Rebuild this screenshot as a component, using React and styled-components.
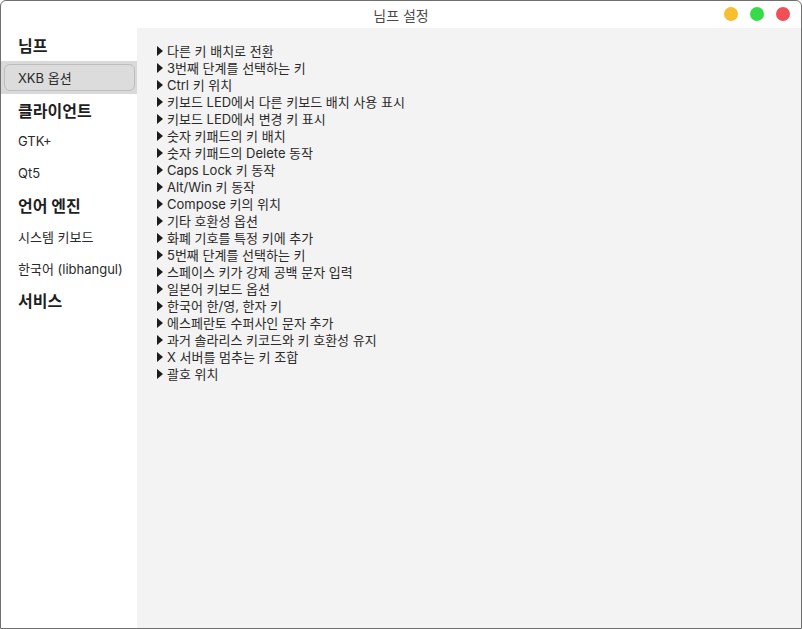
import styled, { createGlobalStyle } from "styled-components";

const Global = createGlobalStyle`
  html, body { margin: 0; padding: 0; background: #ffffff; }
  body { font-family: Inter, "Noto Sans CJK KR", sans-serif; }
`;

const Window = styled.div`
  width: 802px;
  height: 629px;
  box-sizing: border-box;
  border: 1px solid #6f6f6f;
  border-radius: 6px 6px 0 0;
  display: flex;
  flex-direction: column;
  overflow: hidden;
  background: #fff;
`;

const TitleBar = styled.div`
  height: 27px;
  flex: none;
  position: relative;
  display: flex;
  align-items: center;
  justify-content: center;
  font-size: 14px;
  color: #4a4a4a;
`;

const Controls = styled.div`
  position: absolute;
  right: 11px;
  top: 6px;
  display: flex;
  gap: 12px;
`;

const Dot = styled.span`
  width: 14px;
  height: 14px;
  border-radius: 50%;
  background: ${({ $c }) => $c};
`;

const Body = styled.div`
  flex: 1;
  display: flex;
  min-height: 0;
`;

const Sidebar = styled.div`
  width: 136px;
  flex: none;
  background: #fff;
  padding-top: 1px;
  display: flex;
  flex-direction: column;
`;

const Header = styled.div`
  font-size: 16px;
  font-weight: 700;
  color: #1f1f1f;
  padding: 0 17px;
  height: ${({ $h }) => $h || 31}px;
  flex: none;
  display: flex;
  align-items: center;
  white-space: nowrap;
`;

const Item = styled.div`
  font-size: 13px;
  color: #2a2a2a;
  height: 32px;
  flex: none;
  display: flex;
  align-items: center;
  padding: 0 17px;
  white-space: nowrap;
`;

const SelectedRow = styled.div`
  background: #d9d9d9;
  padding: 3px 2px 3px 3px;
`;

const SelectedBox = styled.div`
  height: 25px;
  border: 1px solid #bdbdbd;
  border-radius: 6px;
  background: #dcdcdc;
  font-size: 13px;
  color: #2a2a2a;
  display: flex;
  align-items: center;
  padding-left: 13px;
`;

const Content = styled.div`
  flex: 1;
  background: #f3f3f3;
  padding: 14px 0 0 20px;
`;

const Row = styled.div`
  height: 17px;
  display: flex;
  align-items: center;
  font-size: 13px;
  color: #2a2a2a;
  gap: 4px;
  white-space: nowrap;
`;

const Arrow = styled.span`
  width: 0;
  height: 0;
  border-top: 5px solid transparent;
  border-bottom: 5px solid transparent;
  border-left: 6px solid #1c1c1c;
`;

const items = [
  "다른 키 배치로 전환",
  "3번째 단계를 선택하는 키",
  "Ctrl 키 위치",
  "키보드 LED에서 다른 키보드 배치 사용 표시",
  "키보드 LED에서 변경 키 표시",
  "숫자 키패드의 키 배치",
  "숫자 키패드의 Delete 동작",
  "Caps Lock 키 동작",
  "Alt/Win 키 동작",
  "Compose 키의 위치",
  "기타 호환성 옵션",
  "화폐 기호를 특정 키에 추가",
  "5번째 단계를 선택하는 키",
  "스페이스 키가 강제 공백 문자 입력",
  "일본어 키보드 옵션",
  "한국어 한/영, 한자 키",
  "에스페란토 수퍼사인 문자 추가",
  "과거 솔라리스 키코드와 키 호환성 유지",
  "X 서버를 멈추는 키 조합",
  "괄호 위치",
];

export default function App() {
  return (
    <>
      <Global />
      <Window>
        <TitleBar>
          님프 설정
          <Controls>
            <Dot $c="#f7bf30" />
            <Dot $c="#37db48" />
            <Dot $c="#f04f57" />
          </Controls>
        </TitleBar>
        <Body>
          <Sidebar>
            <Header $h={32}>님프</Header>
            <SelectedRow>
              <SelectedBox>XKB 옵션</SelectedBox>
            </SelectedRow>
            <Header>클라이언트</Header>
            <Item>GTK+</Item>
            <Item>Qt5</Item>
            <Header>언어 엔진</Header>
            <Item>시스템 키보드</Item>
            <Item>한국어 (libhangul)</Item>
            <Header>서비스</Header>
          </Sidebar>
          <Content>
            {items.map((t) => (
              <Row key={t}>
                <Arrow />
                {t}
              </Row>
            ))}
          </Content>
        </Body>
      </Window>
    </>
  );
}
